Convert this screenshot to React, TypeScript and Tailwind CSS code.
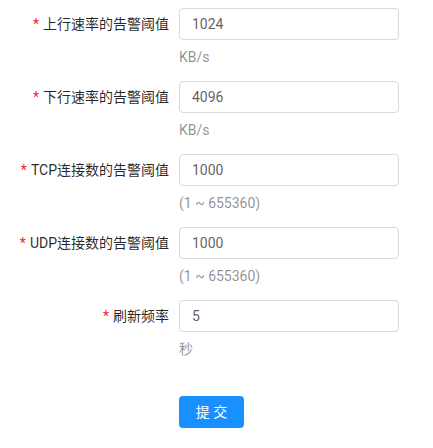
const rows = [
  { label: "上行速率的告警阈值", value: "1024", extra: "KB/s" },
  { label: "下行速率的告警阈值", value: "4096", extra: "KB/s" },
  { label: "TCP连接数的告警阈值", value: "1000", extra: "(1 ~ 655360)" },
  { label: "UDP连接数的告警阈值", value: "1000", extra: "(1 ~ 655360)" },
  { label: "刷新频率", value: "5", extra: "秒" },
];

export default function App() {
  return (
    <div
      className="w-[433px] h-[448px] bg-white pt-2 text-sm"
      style={{ fontFamily: 'Roboto, "Noto Sans CJK SC", sans-serif' }}
    >
      {rows.map((row) => (
        <div key={row.label} className="flex h-[73px]">
          {/* Label */}
          <div className="w-[169px] h-8 flex items-center justify-end text-[rgba(0,0,0,0.85)]">
            <span className="text-[#f5222d] mr-1 text-sm leading-none">*</span>
            <span>{row.label}</span>
          </div>

          {/* Control */}
          <div className="ml-[10px] w-[220px]">
            <input
              readOnly
              value={row.value}
              className="w-full h-8 px-3 border border-[#d9d9d9] rounded bg-white text-[rgba(0,0,0,0.65)] outline-none"
            />
            <div className="mt-[6px] leading-[22px] text-[rgba(0,0,0,0.45)]">{row.extra}</div>
          </div>
        </div>
      ))}

      <div className="flex pt-[23px]">
        <div className="w-[179px]" />
        <button
          type="button"
          className="w-[65px] h-8 rounded bg-[#1890ff] text-white text-sm"
        >
          提 交
        </button>
      </div>
    </div>
  );
}
